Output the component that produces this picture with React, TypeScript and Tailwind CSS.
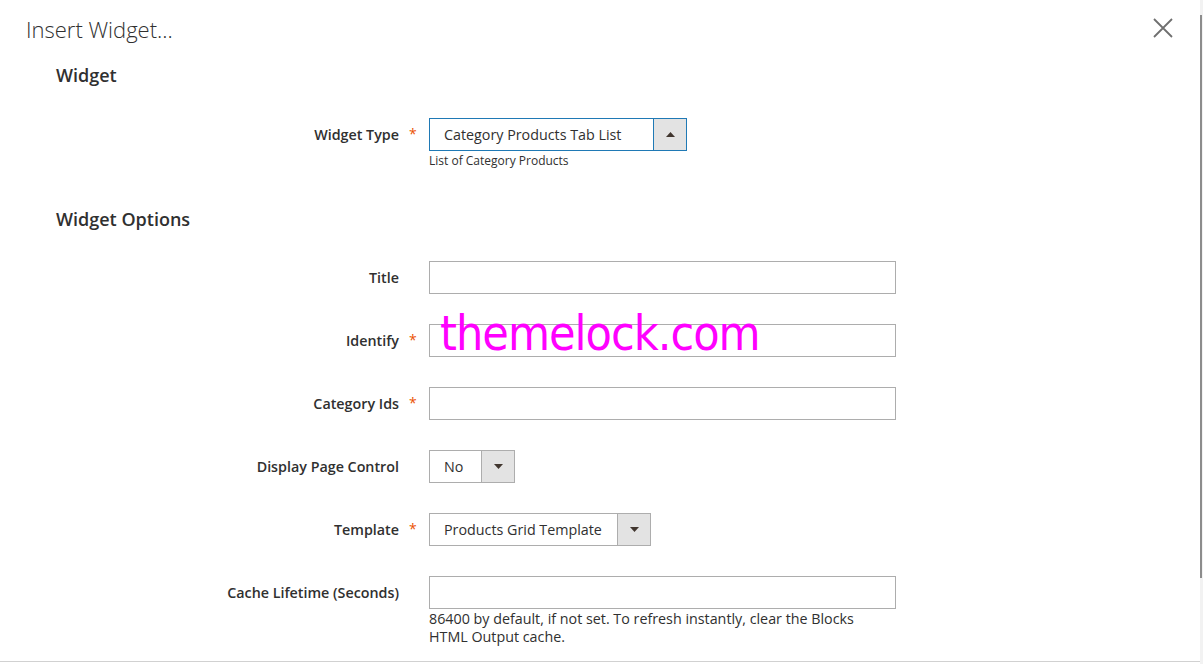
import React from "react";

const font = "font-['Open_Sans','Noto_Sans',sans-serif]";

function Arrow({ up = false }: { up?: boolean }) {
  return (
    <svg width="9" height="5" viewBox="0 0 9 5" className="block">
      {up ? <path d="M0 5 L4.5 0 L9 5 Z" fill="#41362f" /> : <path d="M0 0 L9 0 L4.5 5 Z" fill="#41362f" />}
    </svg>
  );
}

function Select({ value, width, focused = false, up = false }: { value: string; width: string; focused?: boolean; up?: boolean }) {
  return (
    <div
      className={`${width} h-[33px] flex border bg-white ${focused ? "border-[#1f79b5]" : "border-[#adadad]"}`}
    >
      <div className="flex-1 flex items-center pl-[14px] text-[14.3px] text-[#303030] whitespace-nowrap">{value}</div>
      <div
        className={`w-[33px] flex items-center justify-center bg-[#e3e3e3] border-l ${focused ? "border-[#1f79b5]" : "border-[#adadad]"}`}
      >
        <Arrow up={up} />
      </div>
    </div>
  );
}

function Row({
  label,
  required = false,
  children,
  note,
}: {
  label: string;
  required?: boolean;
  children: React.ReactNode;
  note?: React.ReactNode;
}) {
  return (
    <div className="flex items-start">
      <div className="w-[343px] h-[33px] pt-px flex items-center justify-end text-[14.3px] font-semibold text-[#303030] whitespace-nowrap">
        {label}
      </div>
      <div className="w-[30px] h-[33px] flex items-center pl-[10px]">
        {required ? <span className="text-[14px] text-[#eb5202] leading-none -mt-[2px]">*</span> : null}
      </div>
      <div className="flex flex-col">
        {children}
        {note}
      </div>
    </div>
  );
}

const Input = () => <div className="w-[467px] h-[33px] border border-[#adadad] bg-white" />;

export default function App() {
  return (
    <div className={`relative w-[1203px] h-[664px] bg-white flex overflow-hidden ${font}`}>
      <div className="flex-1 h-[662px] flex flex-col border-b border-[#d1d1d1]">
        {/* header */}
        <div className="flex justify-between pl-[26px] pr-[26px] pt-[14px]">
          <h1 className="text-[22px] leading-[30px] font-light text-[#303030]">Insert Widget...</h1>
          <button className="mt-[3px] w-[22px] h-[22px] flex items-center justify-center">
            <svg width="20" height="20" viewBox="0 0 20 20">
              <path d="M1 1 L19 19 M19 1 L1 19" stroke="#6f6f6f" strokeWidth="1.8" fill="none" />
            </svg>
          </button>
        </div>

        <div className="pl-[56px] flex flex-col">
          <h2 className="mt-[19px] text-[18px] leading-[24px] font-semibold text-[#303030]">Widget</h2>

          <div className="mt-[31px]">
            <Row
              label="Widget Type"
              required
              note={<div className="text-[12px] leading-[18px] mt-px text-[#303030]">List of Category Products</div>}
            >
              <Select value="Category Products Tab List" width="w-[258px]" focused up />
            </Row>
          </div>

          <h2 className="mt-[37px] text-[18px] leading-[24px] font-semibold text-[#303030]">Widget Options</h2>

          <div className="mt-[30px] flex flex-col gap-[30px]">
            <Row label="Title">
              <Input />
            </Row>
            <Row label="Identify" required>
              <Input />
            </Row>
            <Row label="Category Ids" required>
              <Input />
            </Row>
            <Row label="Display Page Control">
              <Select value="No" width="w-[86px]" />
            </Row>
            <Row label="Template" required>
              <Select value="Products Grid Template" width="w-[222px]" />
            </Row>
            <Row
              label="Cache Lifetime (Seconds)"
              note={
                <div className="w-[445px] text-[14.3px] leading-[18px] mt-px text-[#303030]">
                  86400 by default, if not set. To refresh instantly, clear the Blocks HTML Output cache.
                </div>
              }
            >
              <Input />
            </Row>
          </div>
        </div>
      </div>

      {/* scrollbar */}
      <div className="w-[3px] h-full bg-[#f2f2f2] flex flex-col pt-[15px]">
        <div className="w-[2px] h-[563px] bg-[#8c8c8c]" />
      </div>

      {/* watermark */}
      <div className="absolute left-[440px] top-[303px] text-[48px] leading-[60px] text-[#ff00ff] tracking-[-1px] font-['DejaVu_Sans_Condensed','DejaVu_Sans',sans-serif]">
        themelock.com
      </div>
    </div>
  );
}
